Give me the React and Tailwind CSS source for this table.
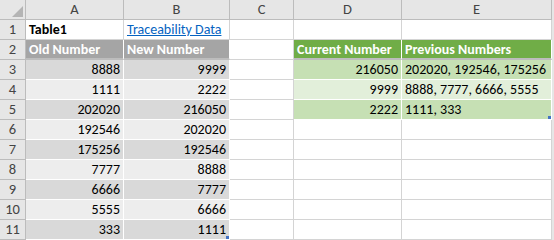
const cols = ['A', 'B', 'C', 'D', 'E'];

const rows = [
  { n: 1, a: { t: 'Table1', k: 'title' }, b: { t: 'Traceability Data', k: 'link' } },
  {
    n: 2,
    a: { t: 'Old Number', k: 'gh' },
    b: { t: 'New Number', k: 'gh' },
    d: { t: 'Current Number', k: 'grh' },
    e: { t: 'Previous Numbers', k: 'grh' },
  },
  { n: 3, a: '8888', b: '9999', d: '216050', e: '202020, 192546, 175256', band: 0 },
  { n: 4, a: '1111', b: '2222', d: '9999', e: '8888, 7777, 6666, 5555', band: 1 },
  { n: 5, a: '202020', b: '216050', d: '2222', e: '1111, 333', band: 0, handleE: true },
  { n: 6, a: '192546', b: '202020', band: 1 },
  { n: 7, a: '175256', b: '192546', band: 0 },
  { n: 8, a: '7777', b: '8888', band: 1 },
  { n: 9, a: '6666', b: '7777', band: 0 },
  { n: 10, a: '5555', b: '6666', band: 1 },
  { n: 11, a: '333', b: '1111', band: 0, handleB: true },
];

const Handle = () => (
  <span className="absolute right-0 bottom-0 w-[3px] h-[3px] bg-[#4472c4]" />
);

function Cell({ children, className = '' }) {
  return (
    <div className={'relative h-5 flex items-center px-[3px] overflow-visible whitespace-nowrap ' + className}>
      {children}
    </div>
  );
}

export default function App() {
  return (
    <div
      className="w-[554px] h-[240px] overflow-hidden bg-[#e6e6e6] text-[14px] text-black"
      style={{ fontFamily: 'Calibri, Carlito, "Liberation Sans", Arial, sans-serif' }}
    >
      <div className="grid grid-cols-[26px_98px_106px_64px_108px_150px] bg-white w-[552px]">
        {/* header row */}
        <div className="relative h-5 bg-[#e6e6e6] border-r border-b border-[#bcbcbc]">
          <svg className="absolute right-[2px] bottom-[2px]" width="11" height="11" viewBox="0 0 11 11">
            <polygon points="11,0 11,11 0,11" fill="#b4b4b4" />
          </svg>
        </div>
        {cols.map((c) => (
          <div
            key={c}
            className="h-5 flex items-center justify-center bg-[#e6e6e6] text-[#444] text-[14.5px] border-r border-b border-[#bcbcbc]"
          >
            {c}
          </div>
        ))}

        {rows.map((r) => {
          const isHead = r.n === 2;
          const grayBg = r.band === 0 ? 'bg-[#d9d9d9]' : 'bg-[#ededed]';
          const greenBg = r.band === 0 ? 'bg-[#c6e0b4]' : 'bg-[#e2efda]';
          const green = r.n >= 3 && r.n <= 5;
          const plain = 'border-r border-b border-[#d4d4d4] bg-white';
          const headBorder = isHead ? ' border-b-2 !border-b-[#bdbdbd]' : '';
          return [
            <div
              key={r.n + 'h'}
              className="h-5 flex items-center justify-center bg-[#e6e6e6] text-[#444] text-[14.5px] border-r border-b border-[#bcbcbc]"
            >
              {r.n}
            </div>,
            ...['a', 'b'].map((k) => {
              const v = r[k];
              if (r.n === 1) {
                return (
                  <Cell key={r.n + k} className={plain}>
                    {v.k === 'title' ? (
                      <span className="font-bold">{v.t}</span>
                    ) : (
                      <span className="text-[#0563c1] underline">{v.t}</span>
                    )}
                  </Cell>
                );
              }
              if (isHead) {
                return (
                  <Cell key={r.n + k} className={'bg-[#a5a5a5] text-white font-bold border-r border-white' + headBorder}>
                    {v.t}
                  </Cell>
                );
              }
              return (
                <Cell key={r.n + k} className={grayBg + ' justify-end border-r border-b border-white'}>
                  {v}
                  {k === 'b' && r.handleB && <Handle />}
                </Cell>
              );
            }),
            <Cell key={r.n + 'c'} className={plain} />,
            ...['d', 'e'].map((k) => {
              const v = r[k];
              if (isHead) {
                return (
                  <Cell key={r.n + k} className={'bg-[#70ad47] text-white font-bold border-r border-white' + headBorder}>
                    {v.t}
                  </Cell>
                );
              }
              if (green) {
                return (
                  <Cell
                    key={r.n + k}
                    className={greenBg + ' border-r border-b border-white' + (k === 'd' ? ' justify-end' : '')}
                  >
                    {v}
                    {k === 'e' && r.handleE && <Handle />}
                  </Cell>
                );
              }
              return <Cell key={r.n + k} className={plain} />;
            }),
          ];
        })}
      </div>
    </div>
  );
}
